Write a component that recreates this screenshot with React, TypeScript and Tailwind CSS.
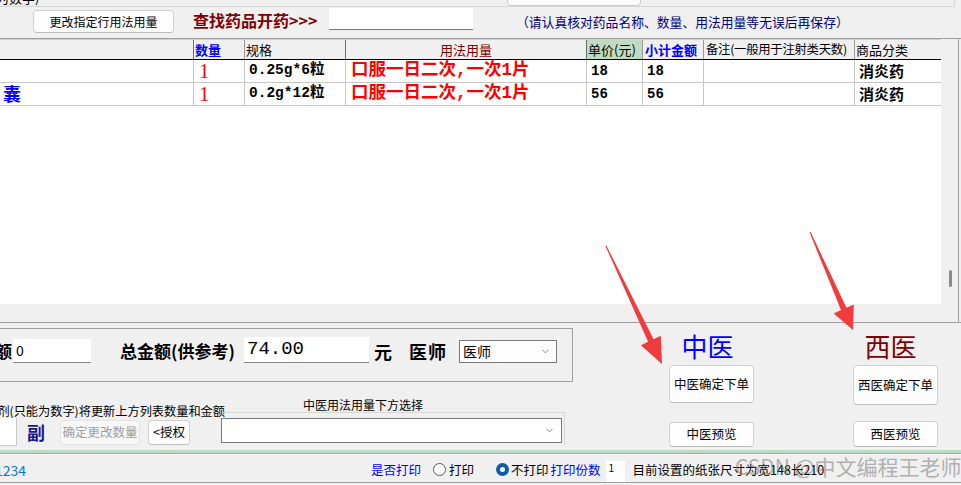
import React from 'react';
import { ChevronDown } from 'lucide-react';

interface Row {
    name: string;
    qty: string;
    spec: string;
    usage: string;
    price: string;
    sub: string;
    note: string;
    cat: string;
}

const rows: Row[] = [
    { name: '', qty: '1', spec: '0.25g*6粒', usage: '口服一日二次,一次1片', price: '18', sub: '18', note: '', cat: '消炎药' },
    { name: '囊', qty: '1', spec: '0.2g*12粒', usage: '口服一日二次,一次1片', price: '56', sub: '56', note: '', cat: '消炎药' }
];

const grid = 'grid grid-cols-[194px_51px_101px_241px_56px_61px_151px_86px]';
const mono = "font-['Liberation_Mono','Noto_Sans_CJK_SC',monospace] font-bold";

const Btn = ({ className, children }: { className: string; children: React.ReactNode }) => (
    <div className={`flex items-center justify-center rounded-[4px] border border-[#d0d0d0] border-b-[#bdbdbd] bg-[#fdfdfd] ${className}`}>
        {children}
    </div>
);

const Radio = ({ checked }: { checked?: boolean }) =>
    checked ? (
        <div className="flex h-[13px] w-[13px] items-center justify-center rounded-full bg-[#0b5cad]">
            <div className="h-[5px] w-[5px] rounded-full bg-white" />
        </div>
    ) : (
        <div className="h-[13px] w-[13px] rounded-full border border-[#5a5a5a] bg-white" />
    );

const App = () => {
    return (
        <div className="relative h-[485px] w-[961px] overflow-hidden bg-[#f0f0f0] font-['Noto_Sans_CJK_SC',sans-serif] text-black">
            {/* cut-off strip from the panel above */}
            <div className="flex h-[7px] w-[955px] overflow-hidden border-r border-b border-[#d6d6d6]">
                <div className="w-[507px] shrink-0">
                    <div className="-mt-[9px] -ml-[4px] whitespace-nowrap text-[13px] leading-[14px]">为数字)</div>
                </div>
                <div className="-mt-[16px] h-[22px] w-[134px] rounded-[4px] border border-[#cacaca] bg-[#fbfbfb]" />
            </div>

            {/* toolbar */}
            <div className="flex h-[32px] items-start border-b border-[#a0a0a0]">
                <Btn className="ml-[33px] mt-[3px] h-[23px] w-[141px] text-[12px] leading-none">更改指定行用法用量</Btn>
                <div className="ml-[19px] mt-[3px] w-[136px] whitespace-nowrap text-[16px] font-bold leading-[20px] text-[#800000]">
                    查找药品开药&gt;&gt;&gt;
                </div>
                <div className="mt-[1px] h-[22px] w-[144px] border-b border-[#7a7a7a] bg-white" />
                <div className="ml-[43px] mt-[8px] whitespace-nowrap text-[12.8px] leading-[14px] text-[#000080]">
                    （请认真核对药品名称、数量、用法用量等无误后再保存）
                </div>
            </div>

            {/* drug grid */}
            <div className="flex h-[284px] border-b border-[#a0a0a0]">
                <div className="h-[265px] w-[941px] bg-white">
                    <div className={`${grid} h-[21px] border-t border-b border-t-[#cfcfcf] border-b-black bg-[#f0f0f0] text-[13px] leading-[19px]`}>
                        <div className="border-r border-[#6e6e6e]" />
                        <div className="border-r border-[#9a9a9a] pl-[1px] font-bold text-[#0000ff]">数量</div>
                        <div className="border-r border-[#6e6e6e] pl-[1px]">规格</div>
                        <div className="border-r border-[#6e6e6e] text-center text-[#800000]">用法用量</div>
                        <div className="border-r border-[#9a9a9a] bg-[#c0dcc0] pl-[1px]">单价(元)</div>
                        <div className="border-r border-[#9a9a9a] pl-[2px] font-bold text-[#0000ff]">小计金额</div>
                        <div className="overflow-hidden whitespace-nowrap border-r border-[#9a9a9a] pl-[2px] text-[12.4px] tracking-[-0.3px]">备注(一般用于注射类天数)</div>
                        <div className="pl-[1px]">商品分类</div>
                    </div>
                    {rows.map((r, i) => (
                        <div key={i} className={`${grid} h-[23px] border-b border-[#c8c8c8] leading-none`}>
                            <div className="flex items-center border-r border-[#c8c8c8] pb-[2px] pl-[3px] text-[18px] font-bold text-[#0000ff]">{r.name}</div>
                            <div className="flex items-center border-r border-[#c8c8c8] pl-[5px] font-['Liberation_Serif',serif] text-[21px] text-[#ff0000]">{r.qty}</div>
                            <div className={`flex items-center border-r border-[#c8c8c8] pb-[1px] pl-[4px] text-[14.5px] ${mono}`}>{r.spec}</div>
                            <div className={`flex items-center whitespace-nowrap border-r border-[#c8c8c8] pb-[1px] pl-[5px] text-[17.5px] text-[#ff0000] ${mono}`}>{r.usage}</div>
                            <div className={`flex items-center border-r border-[#c8c8c8] pb-[1px] pl-[4px] text-[14px] ${mono}`}>{r.price}</div>
                            <div className={`flex items-center border-r border-[#c8c8c8] pb-[1px] pl-[4px] text-[14px] ${mono}`}>{r.sub}</div>
                            <div className="border-r border-[#c8c8c8]">{r.note}</div>
                            <div className="flex items-center pb-[2px] pl-[4px] text-[15px] font-bold">{r.cat}</div>
                        </div>
                    ))}
                </div>
                <div className="w-[17px]">
                    <div className="ml-[8px] mt-[231px] h-[17px] w-[3px] rounded-full bg-[#8a8a8a]" />
                </div>
                <div className="w-px bg-[#a0a0a0]" />
            </div>

            {/* lower controls */}
            <div className="flex h-[127px]">
                <div className="w-[575px] shrink-0">
                    <div className="mt-[5px] flex h-[54px] w-[573px] items-start border-t border-r border-b border-[#a0a0a0]">
                        <div className="-ml-[5px] mt-[12px] w-[17px] text-[17px] font-bold leading-[20px]">额</div>
                        <div className="ml-[1px] mt-[10px] flex h-[24px] w-[78px] items-center border-b border-[#8a8a8a] bg-white pl-[3px] text-[14px]">0</div>
                        <div className="ml-[29px] mt-[12px] w-[124px] whitespace-nowrap text-[17px] font-bold leading-[20px]">总金额(供参考)</div>
                        <div className="mt-[8px] flex h-[26px] w-[125px] items-center border-b border-[#8a8a8a] bg-white pl-[3px] font-['Liberation_Mono',monospace] text-[19px]">
                            74.00
                        </div>
                        <div className="ml-[5px] mt-[12px] text-[18px] font-bold leading-[20px]">元</div>
                        <div className="ml-[17px] mt-[12px] w-[50px] text-[18px] font-bold leading-[20px] tracking-[1px]">医师</div>
                        <div className="mt-[11px] flex h-[23px] w-[98px] items-center justify-between border border-[#7a7a7a] bg-[#fdfdfd] pl-[3px] pr-[5px] text-[14px]">
                            医师
                            <ChevronDown size={11} strokeWidth={1.5} color="#555" />
                        </div>
                    </div>
                    <div className="flex">
                        <div className="w-[221px] shrink-0">
                            <div className="mt-[22px] flex h-[14px] w-[225px] justify-end overflow-hidden">
                                <div className="shrink-0 whitespace-nowrap text-[12.2px] leading-[14px]">剂(只能为数字)将更新上方列表数量和金额</div>
                            </div>
                            <div className="flex items-start">
                                <div className="-ml-[20px] h-[28px] w-[37px] border-r border-b border-[#c8c8c8] bg-white" />
                                <div className="ml-[10px] mt-[4px] w-[18px] text-[18px] font-bold leading-[20px] text-[#1a1a8c]">副</div>
                                <div className="ml-[15px] mt-[2px] flex h-[25px] w-[80px] items-center justify-center rounded-[4px] border border-[#e4e4e4] bg-[#f7f7f7] text-[12.5px] text-[#a0a0a0]">
                                    确定更改数量
                                </div>
                                <Btn className="ml-[8px] mt-[2px] h-[25px] w-[42px] text-[12.5px]">&lt;授权</Btn>
                            </div>
                        </div>
                        <div className="w-[344px]">
                            <div className="ml-[82px] mt-[16px] whitespace-nowrap text-[12px] leading-[14px]">中医用法用量下方选择</div>
                            <div className="ml-[2px] h-[33px] w-[342px] border-t border-r border-[#d8d8d8]">
                                <div className="-ml-[2px] mt-[5px] flex h-[25px] w-[341px] items-center justify-end border border-[#7a7a7a] bg-white pr-[6px]">
                                    <ChevronDown size={11} strokeWidth={1.5} color="#555" />
                                </div>
                            </div>
                        </div>
                    </div>
                </div>

                <div className="ml-[94px] w-[85px] shrink-0">
                    <div className="mt-[8px] pr-[8px] text-center text-[26px] leading-[30px] text-[#0000ff]">中医</div>
                    <Btn className="mt-[4px] h-[38px] w-[85px] text-[12.5px]">中医确定下单</Btn>
                    <Btn className="mt-[19px] h-[25px] w-[85px] text-[12.5px]">中医预览</Btn>
                </div>
                <div className="ml-[99px] w-[85px] shrink-0">
                    <div className="mt-[8px] pr-[10px] text-center text-[26px] leading-[30px] text-[#800000]">西医</div>
                    <Btn className="mt-[4px] h-[40px] w-[85px] text-[12.5px]">西医确定下单</Btn>
                    <Btn className="mt-[16px] h-[26px] w-[85px] text-[12.5px]">西医预览</Btn>
                </div>
            </div>

            {/* status bar */}
            <div className="border-t-[3px] border-[#bedcc5]" />
            <div className="h-[2px] border-t border-b border-t-[#a8a8a8] border-b-white" />
            <div className="flex h-[28px] items-center border-b border-[#a0a0a0] text-[12.5px] leading-[16px]">
                <div className="w-[371px] shrink-0">
                    <div className="-ml-[5px] mt-[3px] text-[14px] text-[#0b78d0]">1234</div>
                </div>
                <div className="mt-[2px] text-[#0000ff]">是否打印</div>
                <div className="ml-[12px] mt-[2px]"><Radio /></div>
                <div className="ml-[3px] mt-[2px]">打印</div>
                <div className="ml-[22px] mt-[2px]"><Radio checked /></div>
                <div className="ml-[2px] mt-[2px]">不打印</div>
                <div className="ml-[2px] mt-[2px] text-[#0000ff]">打印份数</div>
                <div className="ml-[5px] h-[21px] w-[19px] self-end bg-white pl-[3px] text-[10px] leading-[14px]">1</div>
                <div className="ml-[8px] mt-[2px] whitespace-nowrap">目前设置的纸张尺寸为宽148长210</div>
            </div>

            {/* screenshot watermark */}
            <div className="pointer-events-none absolute left-[735px] top-[453px] whitespace-nowrap text-[21px] leading-[26px] text-[rgba(110,110,110,0.5)]">
                CSDN @中文编程王老师
            </div>

            {/* red annotation arrows */}
            <svg className="pointer-events-none absolute left-0 top-0" width="961" height="485">
                <polygon
                    points="605.5,246.2 606.5,245.8 653.6,339.2 660.8,335.8 662,364 640.9,345.2 648.1,341.8"
                    fill="#f03c3c"
                />
                <polygon
                    points="809.5,232.2 810.5,231.8 846.5,307.7 853.8,304.5 853,330 833.7,313.4 841,310.1"
                    fill="#f03c3c"
                />
            </svg>
        </div>
    );
};

export default App;
